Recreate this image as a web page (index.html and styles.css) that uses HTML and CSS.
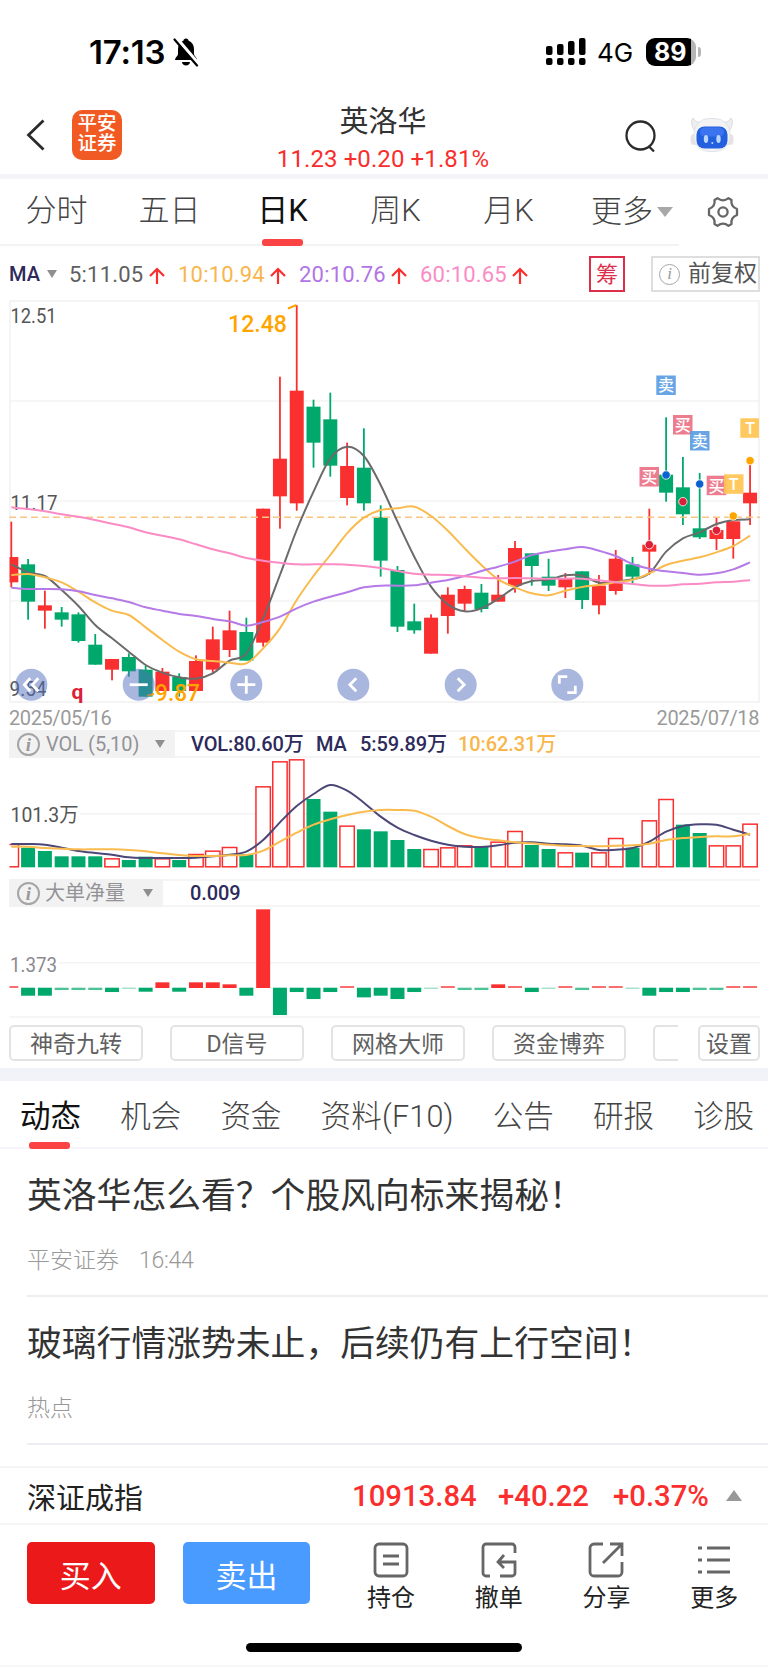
FILE: index.html
```html
<!DOCTYPE html>
<html lang="zh-CN">
<head>
<meta charset="utf-8">
<title>英洛华</title>
<link rel="stylesheet" href="styles.css">
</head>
<body>
<div class="screen">
  <div class="status">
    <span class="clock">17:13</span>
    <svg class="bell" width="28" height="30" viewBox="0 0 28 30"><path d="M14 1.5c-1.6 0-2.4 1-2.6 2.2C7.900 5 6 8 6 12v5c0 2-3 3.500-3 6h22c0-2.500-3-4-3-6v-5c0-4-1.900-7-5.400-8.300C16.400 2.500 15.600 1.500 14 1.500zM10 25h8c0 2-2 3.500-4 3.500S10 27 10 25z"/><path d="M4.500 1l22 26" stroke="#fff" stroke-width="3.500"/><path d="M2.500 2.500l22.500 26" stroke="#000" stroke-width="2.200" stroke-linecap="round"/></svg>
    <svg class="signal" width="40" height="30" viewBox="0 0 40 30"><rect x="0" y="9" width="6.500" height="9" rx="2"/><rect x="11" y="7" width="6.500" height="11" rx="2"/><rect x="22" y="4" width="6.500" height="14" rx="2"/><rect x="33" y="1" width="6.500" height="17" rx="2"/><rect x="0" y="21" width="6.500" height="7" rx="2"/><rect x="11" y="21" width="6.500" height="7" rx="2"/><rect x="22" y="21" width="6.500" height="7" rx="2"/><rect x="33" y="21" width="6.500" height="7" rx="2"/></svg>
    <span class="net">4G</span>
    <span class="battery">89</span><span class="battery-cap"></span>
  </div>

  <header class="header">
    <svg class="back" width="20" height="34" viewBox="0 0 20 34"><path d="M17.500 2.500L2.500 17l15 14.500"/></svg>
    <div class="logo"><span>平安</span><span>证券</span></div>
    <div class="title"><h1>英洛华</h1><p>11.23 +0.20 +1.81%</p></div>
    <svg class="search" width="32" height="34" viewBox="0 0 32 34"><circle cx="15.500" cy="15.500" r="14"/><path d="M23.500 26l5.500 5.500"/></svg>
    <svg class="robot" width="44" height="36" viewBox="0 0 44 36"><path d="M5 14C1 9 1 4 3 1c2 3 4 5 9 4zM39 14c4-5 4-10 2-13-2 3-4 5-9 4z" fill="#eceef0" stroke="#d9dbdf" stroke-width="1"/><rect x=".5" y="17" width="43" height="11" rx="4" fill="#e6e3e5"/><rect x="4" y="1.500" width="36" height="33" rx="15" fill="#f3f3f5" stroke="#e2e3e7" stroke-width="1"/><rect x="6.500" y="9.500" width="31" height="22" rx="8" fill="#2360e0"/><rect x="10" y="10.500" width="24" height="9" rx="5" fill="#3b74ee"/><ellipse cx="16" cy="22" rx="2.200" ry="4" fill="#b9d6ff"/><ellipse cx="28.500" cy="22" rx="2.200" ry="4" fill="#b9d6ff"/><circle cx="22.300" cy="26" r="1" fill="#b9d6ff"/></svg>
  </header>

  <nav class="periods">
    <div class="period-list">
      <span>分时</span><span>五日</span><span class="on">日K</span><span>周K</span><span>月K</span>
      <span class="more">更多<i class="tri down"></i></span>
    </div>
    <svg class="gear" width="32" height="32" viewBox="0 0 32 32"><path d="M10.500 2.200Q16 6.500 21.500 2.200L24.500 4Q23.500 10.500 30 13v6Q23.500 21.500 24.500 28l-3 1.800Q16 25.500 10.500 29.800L7.500 28Q8.500 21.500 2 19v-6Q8.500 10.500 7.500 4z"/><circle cx="16" cy="16" r="4.600"/></svg>
  </nav>

  <div class="ma-row">
    <span class="ma-name">MA</span><i class="tri small"></i>
    <span class="m5">5:11.05</span><svg class="up" viewBox="0 0 16 18"><path d="M8 17V2M1 9l7-7 7 7"/></svg>
    <span class="m10">10:10.94</span><svg class="up" viewBox="0 0 16 18"><path d="M8 17V2M1 9l7-7 7 7"/></svg>
    <span class="m20">20:10.76</span><svg class="up" viewBox="0 0 16 18"><path d="M8 17V2M1 9l7-7 7 7"/></svg>
    <span class="m60">60:10.65</span><svg class="up" viewBox="0 0 16 18"><path d="M8 17V2M1 9l7-7 7 7"/></svg>
    <span class="chip">筹</span>
    <span class="adjust"><i class="info sm">i</i>前复权</span>
  </div>

  <svg class="chart" id="kline" width="768" height="403" viewBox="0 300 768 403"></svg>
  <div class="dates"><span>2025/05/16</span><span>2025/07/18</span></div>

  <div class="ind-head">
    <div class="ind-name vol"><i class="info">i</i><span>VOL (5,10)</span><i class="tri small"></i></div>
    <span class="v1">VOL:80.60万</span><span class="v2">MA</span><span class="v3">5:59.89万</span><span class="v4">10:62.31万</span>
  </div>
  <svg class="chart" id="volume" width="768" height="122" viewBox="0 758 768 122"></svg>

  <div class="ind-head flow-head">
    <div class="ind-name net-flow"><i class="info">i</i><span>大单净量</span><i class="tri small"></i></div>
    <span class="v5">0.009</span>
  </div>
  <svg class="chart" id="flow" width="768" height="110" viewBox="0 908 768 110"></svg>

  <div class="tools">
    <div class="tool-list"><span>神奇九转</span><span>D信号</span><span>网格大师</span><span>资金博弈</span><span></span></div>
    <span class="setup">设置</span>
  </div>

  <nav class="sections">
    <span class="on">动态</span><span>机会</span><span>资金</span><span class="f10">资料(F10)</span><span>公告</span><span>研报</span><span>诊股</span>
  </nav>

  <article class="news"><h2>英洛华怎么看？个股风向标来揭秘！</h2><p>平安证券<time>16:44</time></p></article>
  <article class="news"><h2>玻璃行情涨势未止，后续仍有上行空间！</h2><p>热点</p></article>

  <div class="index-bar">
    <span class="idx-name">深证成指</span><span class="n1">10913.84</span><span class="n2">+40.22</span><span class="n3">+0.37%</span><i class="tri up-tri"></i>
  </div>

  <footer class="actions">
    <div class="btn buy">买入</div><div class="btn sell">卖出</div>
    <div class="act"><svg viewBox="0 0 36 36"><rect x="2" y="2" width="32" height="32" rx="4"/><path d="M10 14h16M10 22h16"/></svg>持仓</div>
    <div class="act"><svg viewBox="0 0 36 36"><path d="M9 34H5a3 3 0 0 1-3-3V5a3 3 0 0 1 3-3h26a3 3 0 0 1 3 3v6M19 34h12a3 3 0 0 0 3-3V20H17M23 13l-6 7 6 6"/></svg>撤单</div>
    <div class="act"><svg viewBox="0 0 36 36"><path d="M15 2H6a4 4 0 0 0-4 4v24a4 4 0 0 0 4 4h24a4 4 0 0 0 4-4V20M22 2h12v12M34 2L15 21"/></svg>分享</div>
    <div class="act"><svg viewBox="0 0 36 36"><path d="M11 6h23M11 18h23M11 30h23M2 6h4M2 18h4M2 30h4"/></svg>更多</div>
  </footer>
  <div class="home"></div>
</div>
<script src="charts.js"></script>
</body>
</html>
```
FILE: styles.css
```css
* { box-sizing: border-box; margin: 0; padding: 0; }
body { background: #fff; font-family: Roboto, "Noto Sans CJK SC", sans-serif; color: #333; }
i { font-style: normal; }
.screen { width: 768px; height: 1667px; overflow: hidden; display: flex; flex-direction: column; border-bottom: 2px solid #f7f7f8; }
.screen > * { flex: none; }

.status { height: 100px; display: flex; align-items: center; padding: 4px 0 0 89px; color: #000; font-family: Inter, sans-serif; }
.clock { width: 83px; font-size: 33px; font-weight: 600; letter-spacing: -0.2px; white-space: nowrap; }
.signal { margin-left: 346px; }
.net { width: 49px; margin-left: 11px; font-size: 26px; padding-top: 1px; }
.battery { width: 50px; height: 28px; border-radius: 9px; background: linear-gradient(90deg, #000 45px, #b5b5b5 45px); color: #fff; font-size: 25px; font-weight: 700; line-height: 28px; padding-left: 8px; }
.battery-cap { width: 3px; height: 10px; margin-left: 2px; border-radius: 0 3px 3px 0; background: #b5b5b5; }

.header { height: 79px; display: flex; border-bottom: 5px solid #f4f4f9; }
.header svg { fill: none; stroke: #2b2b2b; }
.back { margin: 18px 0 0 26px; stroke-width: 2.800; }
.logo { width: 50px; height: 50px; margin: 10px 0 0 26px; padding-top: 4px; border-radius: 10px; background: #f15a22; color: #fff; font-size: 19.500px; font-weight: 500; display: flex; flex-direction: column; align-items: center; }
.logo span { height: 20px; line-height: 20px; }
.title { width: 260px; margin-left: 131px; text-align: center; }
.title h1 { font-size: 29px; font-weight: 400; line-height: 41px; padding-top: 2px; }
.title p { font-size: 24px; line-height: 33px; color: #fa2d2d; white-space: nowrap; letter-spacing: .1px; }
.search { margin: 20px 0 0 112px; stroke-width: 2.300; }
.header .robot { margin: 17px 0 0 33px; stroke: none; }

.periods { height: 67px; display: flex; }
.period-list { width: 679px; height: 67px; display: flex; border-bottom: 2px solid #f3f3f3; font-size: 31px; font-weight: 300; color: #444; line-height: 63px; }
.period-list span { width: 113px; text-align: center; flex: none; }
.on { position: relative; color: #111; }
.on::after { content: ""; position: absolute; left: 50%; bottom: -2px; width: 41px; height: 7px; margin-left: -21px; border-radius: 3px; background: #fb4343; }
.period-list .on { font-weight: 400; }
.period-list .more { width: 114px; padding-left: 26px; display: flex; align-items: center; }
.tri { display: inline-block; width: 0; height: 0; border: 5px solid transparent; border-top: 8px solid #8f8f8f; border-bottom: 0; }
.tri.down { border-width: 10px 8px 0; border-top-color: #a8a8a8; margin-left: 4px; }
.gear { margin: 17px 0 0 28px; fill: none; stroke: #666; stroke-width: 2.300; stroke-linejoin: round; }

.ma-row { height: 54px; padding: 2px 8px 0 9px; display: flex; align-items: center; font-size: 22px; white-space: nowrap; }
.ma-row > span { flex: none; }
.ma-name { width: 38px; color: #2d2a5c; font-size: 20px; font-weight: 500; }
.m5 { width: 80px; margin-left: 12px; color: #606060; letter-spacing: .2px; }
.m10, .m20, .m60 { width: 92px; margin-left: 13px; letter-spacing: .2px; }
.m10 { color: #f8b64b; }
.m20 { color: #b274e6; }
.m60 { color: #fb8bc5; }
.up { width: 16px; height: 18px; flex: none; margin-top: 3px; fill: none; stroke: #fb2e2e; stroke-width: 2.200; }
.chip { width: 36px; height: 36px; margin-left: 61px; border: 2px solid #dc2f4b; color: #dc2f4b; text-align: center; line-height: 34px; }
.adjust { width: 109px; height: 36px; margin-left: 26px; padding-left: 6px; border: 2px solid #dedede; display: flex; align-items: center; font-size: 23px; color: #555; line-height: 34px; }
.info { display: inline-block; width: 23px; height: 23px; border: 2px solid #a5a5a5; border-radius: 50%; font: italic 700 19px/19px "Liberation Serif", serif; text-align: center; color: #999; }
.info.sm { width: 21px; height: 21px; line-height: 17px; font-size: 17px; font-weight: 400; border-width: 1.500px; margin-right: 8px; }

.chart { display: block; overflow: visible; }
.chart text { white-space: pre; }
.dates { height: 27px; padding: 0 9px 0 9px; display: flex; justify-content: space-between; font-size: 20px; line-height: 30px; color: #9a9a9a; letter-spacing: -.4px; }

.ind-head { height: 28px; margin: 0 8px 0 9px; display: flex; align-items: center; border: solid #f5f5f5; border-width: 2px 0; font-size: 20px; line-height: 24px; color: #2d2a5c; white-space: nowrap; }
.ind-head > span { font-weight: 500; letter-spacing: -.1px; }
.flow-head { margin-top: -1px; margin-bottom: 1px; }
.ind-name { height: 28px; padding-left: 8px; display: flex; align-items: center; background: #f2f2f3; color: #929297; flex: none; }
.ind-name.vol { width: 166px; }
.ind-name.vol span { width: 109px; margin-left: 6px; }
.ind-name.net-flow { width: 154px; }
.ind-name.net-flow span { width: 98px; margin-left: 5px; }
.v1 { width: 125px; margin-left: 16px; }
.v2 { width: 44px; }
.v3 { width: 98px; }
.v4 { color: #f8b64b; }
.v5 { margin-left: 27px; }

.tools { height: 50px; padding: 7px 8px 0 9px; display: flex; justify-content: space-between; font-size: 23px; color: #606060; }
.tool-list { width: 669px; overflow: hidden; display: flex; gap: 27px; }
.tools span { height: 36px; border: 2px solid #e3e3e5; border-radius: 5px; line-height: 36px; text-align: center; flex: none; }
.tool-list span { width: 134px; }
.tools .setup { width: 62px; }

.sections { height: 81px; padding: 0 0 0 20px; border-top: 13px solid #f2f3f8; border-bottom: 2px solid #f5f5fb; display: flex; gap: 40.200px; font-size: 30.500px; font-weight: 300; color: #444; line-height: 72px; white-space: nowrap; }
.sections span { width: 60px; flex: none; }
.sections .f10 { width: 132px; letter-spacing: .2px; }
.sections .on { font-weight: 400; }

.news { height: 148px; margin-left: 27px; border-bottom: 2px solid #eeeef2; }
.news h2 { font-size: 34.800px; font-weight: 400; line-height: 50px; padding-top: 22px; white-space: nowrap; }
.news p { font-size: 23px; font-weight: 300; line-height: 34px; padding-top: 23px; color: #999; }
.news time { margin-left: 20px; letter-spacing: -.3px; }

.index-bar { height: 59px; margin-top: 21px; padding-left: 27px; display: flex; align-items: center; border: solid #f5f5f5; border-width: 2px 0; font-size: 29.300px; font-weight: 500; color: #fb2e2e; white-space: nowrap; }
.index-bar span { padding-top: 1px; }
.idx-name { width: 325px; color: #222; font-size: 29px; font-weight: 400; }
.n1 { width: 146px; }
.n2 { width: 115px; }
.n3 { width: 113px; }
.tri.up-tri { border-width: 0 8px 11px; border-bottom: 11px solid #999; }

.actions { height: 117px; padding: 17px 0 0 27px; display: flex; }
.btn { width: 128px; height: 62px; margin-right: 28px; border-radius: 5px; color: #fff; font-size: 31px; line-height: 69px; text-align: center; }
.buy { background: #eb1919; }
.sell { background: #4a9bff; margin-right: 27px; }
.act { width: 108px; display: flex; flex-direction: column; align-items: center; font-size: 24px; line-height: 40px; color: #222; }
.act svg { width: 36px; height: 36px; fill: none; stroke: #666; stroke-width: 2.800; }
.home { width: 276px; height: 9px; margin: 1px 0 0 246px; border-radius: 5px; background: #000; }
```
FILE: charts.js
```js
const RED = '#fa3030', GREEN = '#00a96b', STEP = 16.79, FIRST = 11.3;
const cx = i => FIRST + STEP * i;
const rect = (x, y, w, h, attrs) => `<rect x="${x.toFixed(2)}" y="${y.toFixed(2)}" width="${w.toFixed(2)}" height="${h.toFixed(2)}" ${attrs}/>`;
const hline = (y, color = '#f3f3f3') => `<path d="M9 ${y}H760" stroke="${color}" stroke-width="1.5"/>`;
const label = (x, y, s, w, size, color, extra = '') => `<text x="${x}" y="${y}" font-size="${size}" fill="${color}" textLength="${w}" lengthAdjust="spacingAndGlyphs" ${extra}>${s}</text>`;

// Catmull-Rom curve through one value per bar
function curve(values, top, color) {
  const p = values.map((v, i) => [cx(i), top + v / 3]);
  let d = `M${p[0]}`;
  for (let i = 0; i < p.length - 1; i++) {
    const a = p[i - 1] || p[i], b = p[i], c = p[i + 1], e = p[i + 2] || c;
    d += `C${b[0] + (c[0] - a[0]) / 6} ${b[1] + (c[1] - a[1]) / 6} ${c[0] - (e[0] - b[0]) / 6} ${c[1] - (e[1] - b[1]) / 6} ${c[0]} ${c[1]}`;
  }
  return `<path d="${d}" fill="none" stroke="${color}" stroke-width="2"/>`;
}

// colour, high, body top, body bottom, low
const candles = `r665,771,847,862 g777,793,905,959 r872,916,932,986 g921,937,959,980 g937,943,1023,1028 g1002,1034,1094,1094 r1077,1077,1109,1141 g1060,1071,1114,1130 g1098,1109,1190,1190 r1104,1115,1173,1173 g1120,1131,1173,1190 r1066,1083,1173,1173 r980,1018,1109,1119 r932,991,1050,1071 g953,996,1082,1082 r626,626,1028,1040 r230,476,589,686 r15,272,610,632 g299,320,428,503 g278,358,497,530 r428,498,594,616 g385,503,610,632 g616,652,782,830 g798,810,980,996 g911,964,991,1001 r943,953,1061,1061 r862,884,948,1001 r857,867,911,932 g852,878,927,937 r825,884,905,905 r723,744,857,878 g760,760,798,857 g776,830,857,873 r819,836,862,894 g814,814,900,927 r825,857,916,943 r750,776,873,884 g771,793,830,851 r626,734,755,825 g352,524,578,605 g471,562,643,675 g519,685,712,717 r653,690,717,750 r660,664,717,776 r494,578,610,675`.split(' ');
const ma5 = [793,817,828,870,918,975,1015,1055,1095,1118,1132,1136,1120,1082,1060,955,825,690,575,475,440,468,555,665,770,860,913,934,925,897,862,843,839,826,827,848,845,838,820,755,715,697,672,660,658];
const ma10 = [825,822,832,847,875,907,932,945,982,1020,1055,1078,1083,1088,1090,1045,985,900,828,765,700,653,630,625,620,648,692,745,795,838,862,880,886,872,861,855,847,839,820,795,782,772,757,738,707];
const ma20 = [863,867,867,868,874,885,895,906,922,932,942,948,957,964,977,966,950,925,905,890,877,862,857,857,856,848,840,828,813,800,785,765,755,748,741,752,768,792,806,814,819,824,820,808,787];
const ma60 = [622,627,634,643,650,660,671,682,697,707,718,733,748,760,774,782,788,793,793,793,794,798,804,813,821,824,825,829,833,835,834,835,836,836,836,841,847,852,857,857,853,851,847,845,841];

let k = '<defs><clipPath id="plot"><rect x="9.500" y="300" width="751" height="403"/></clipPath></defs>';
k += [401, 501, 601].map(y => hline(y)).join('');
k += '<rect x="10" y="301" width="749" height="401" fill="none" stroke="#f1f1f1" stroke-width="1.500"/>';
k += label(10.5, 323, '12.51', 46, 20, '#555') + label(10.5, 509.5, '11.17', 47, 20, '#555') + label(9.5, 696, '9.54', 37, 20, '#555');
k += '<g clip-path="url(#plot)">';
candles.forEach((c, i) => {
  const col = c[0] === 'r' ? RED : GREEN;
  const [h, t, b, l] = c.slice(1).split(',').map(v => 300 + v / 3);
  k += rect(cx(i) - .9, h, 1.8, l - h, `fill="${col}"`) + rect(cx(i) - 7, t, 14, b - t, `fill="${col}"`);
});
k += '<path d="M9 517.300H760" stroke="#f8c682" stroke-width="1.500" stroke-dasharray="7 4"/>';
k += curve(ma5, 300, '#6b6b6b') + curve(ma10, 300, '#f9bb4d') + curve(ma20, 300, '#b57ae6') + curve(ma60, 300, '#fb8bc5') + '</g>';
k += '<path d="M288 308.500L296.500 305M147 695.500L154 694" stroke="#ffa500" stroke-width="2" fill="none"/>';
k += label(228, 331.8, '12.48', 59, 24.5, '#ffa500', 'font-weight="500"') + label(155, 701, '9.87', 45, 24, '#ffa500', 'font-weight="500"');
k += '<text x="71.500" y="699" font-size="21" font-weight="700" fill="#dc2038" font-family="Roboto">q</text>';

const sell = ['#5c9de2', '卖'], buy = ['#ed7186', '买'], both = ['#ffc452', 'T'];
[[656.3, 375.5, sell], [673, 415, buy], [690, 431, sell], [639.5, 467, buy], [706.7, 475.7, buy], [724, 474.3, both], [740.3, 418.3, both]].forEach(([x, y, [c, s]]) => {
  k += rect(x, y, Math.min(19.5, 759 - x), 19.5, `fill="${c}" fill-opacity=".92"`) + `<text x="${x + 9.7}" y="${y + 15.8}" font-size="16" font-weight="500" fill="#fff" text-anchor="middle">${s}</text>`;
});
[[38, 734, '#dc2038'], [39, 525, '#0a62d0'], [40, 605, '#dc2038'], [41, 552, '#0a62d0'], [42, 691, '#dc2038'], [43, 648, '#ffa500'], [44, 482, '#ffa500']].forEach(([i, v, c]) => {
  k += `<circle cx="${cx(i)}" cy="${300 + v / 3}" r="4.200" fill="${c}" stroke="#fff" stroke-width=".8"/>`;
});
[[31.3, 'M-1-6.500l-6 6.500 6 6.500M7-6.500l-6 6.500 6 6.500'], [138.7, 'M-9 0H9'], [246.3, 'M-9 0H9M0-9V9'], [353.3, 'M3-6.500L-3.500 0 3 6.500'], [460.7, 'M-3-6.500L3.500 0l-6.500 6.500'], [567.3, 'M-8-1V-8H0M8 1V8H0']].forEach(([x, d]) => {
  k += `<g transform="translate(${x} 684.700)"><circle r="16" fill="#536fbf" fill-opacity=".5"/><path d="${d}" fill="none" stroke="#fff" stroke-width="2.800"/></g>`;
});
document.getElementById('kline').innerHTML = k;

// colour and bar top
const vols = 'r432 g443 g453 g469 g469 g469 r475 g480 g470 r475 g480 r462 r452 r441 g463 r259 r184 r178 g297 g335 r377 g388 g394 g420 g447 r447 r442 r436 g441 r425 r393 g435 g447 r457 g458 r457 r414 g443 r361 r297 g374 g399 r436 r436 r371'.split(' ');
const vma5 = [432,432,434,443,453,459,464,472,474,474,474,473,469,464,455,420,367,318,282,255,272,308,350,383,405,422,434,440,441,436,428,427,431,433,437,450,449,444,425,395,378,373,374,389,404];
const vma10 = [440,440,444,446,448,448,448,450,454,460,465,468,468,466,465,452,425,398,374,358,345,335,330,330,332,350,378,402,415,421,427,430,434,437,438,439,437,436,431,420,414,411,409,409,401];
let v = '<defs><clipPath id="vplot"><rect x="9.500" y="758" width="751" height="122"/></clipPath></defs><g clip-path="url(#vplot)">' + hline(813.7);
vols.forEach((s, i) => {
  const t = 700 + s.slice(1) / 3;
  v += s[0] === 'g' ? rect(cx(i) - 7, t, 14, 867.3 - t, `fill="${GREEN}"`) : rect(cx(i) - 7.2, t + .5, 14.4, 866.3 - t, `fill="#fff" stroke="${RED}" stroke-width="1.500"`);
});
v += curve(vma5, 700, '#4b4777') + curve(vma10, 700, '#f9bb4d') + '</g>';
v += '<rect x="10" y="800" width="70" height="26" fill="#fff"/>' + label(10.5, 822, '101.3万', 68, 20, '#555');
document.getElementById('volume').innerHTML = v;

// signed height of each net-flow bar
const flows = [6,-24,-24,-7,-7,-7,-13,-3,-12,17,-12,17,17,11,-24,236,-82,-13,-34,-13,6,-29,-24,-34,-13,-3,6,-7,-7,11,6,-13,-3,6,-7,6,6,-3,-24,-13,-13,-7,-7,6,6];
let f = '<defs><clipPath id="fplot"><rect x="9.500" y="908" width="751" height="110"/></clipPath></defs><g clip-path="url(#fplot)">' + hline(962.7) + hline(1017);
flows.forEach((n, i) => {
  const h = Math.abs(n) / 3, o = h < 1.5 ? .5 : h < 3 ? .7 : 1;
  f += rect(cx(i) - 7, n > 0 ? 988 - h : 987.7, 14, h, `fill="${n > 0 ? RED : GREEN}" opacity="${o}"`);
});
f += '</g><rect x="10" y="954" width="49" height="20" fill="#fff"/>' + label(10, 971.7, '1.373', 47, 20, '#8a8a90');
document.getElementById('flow').innerHTML = f;
```
